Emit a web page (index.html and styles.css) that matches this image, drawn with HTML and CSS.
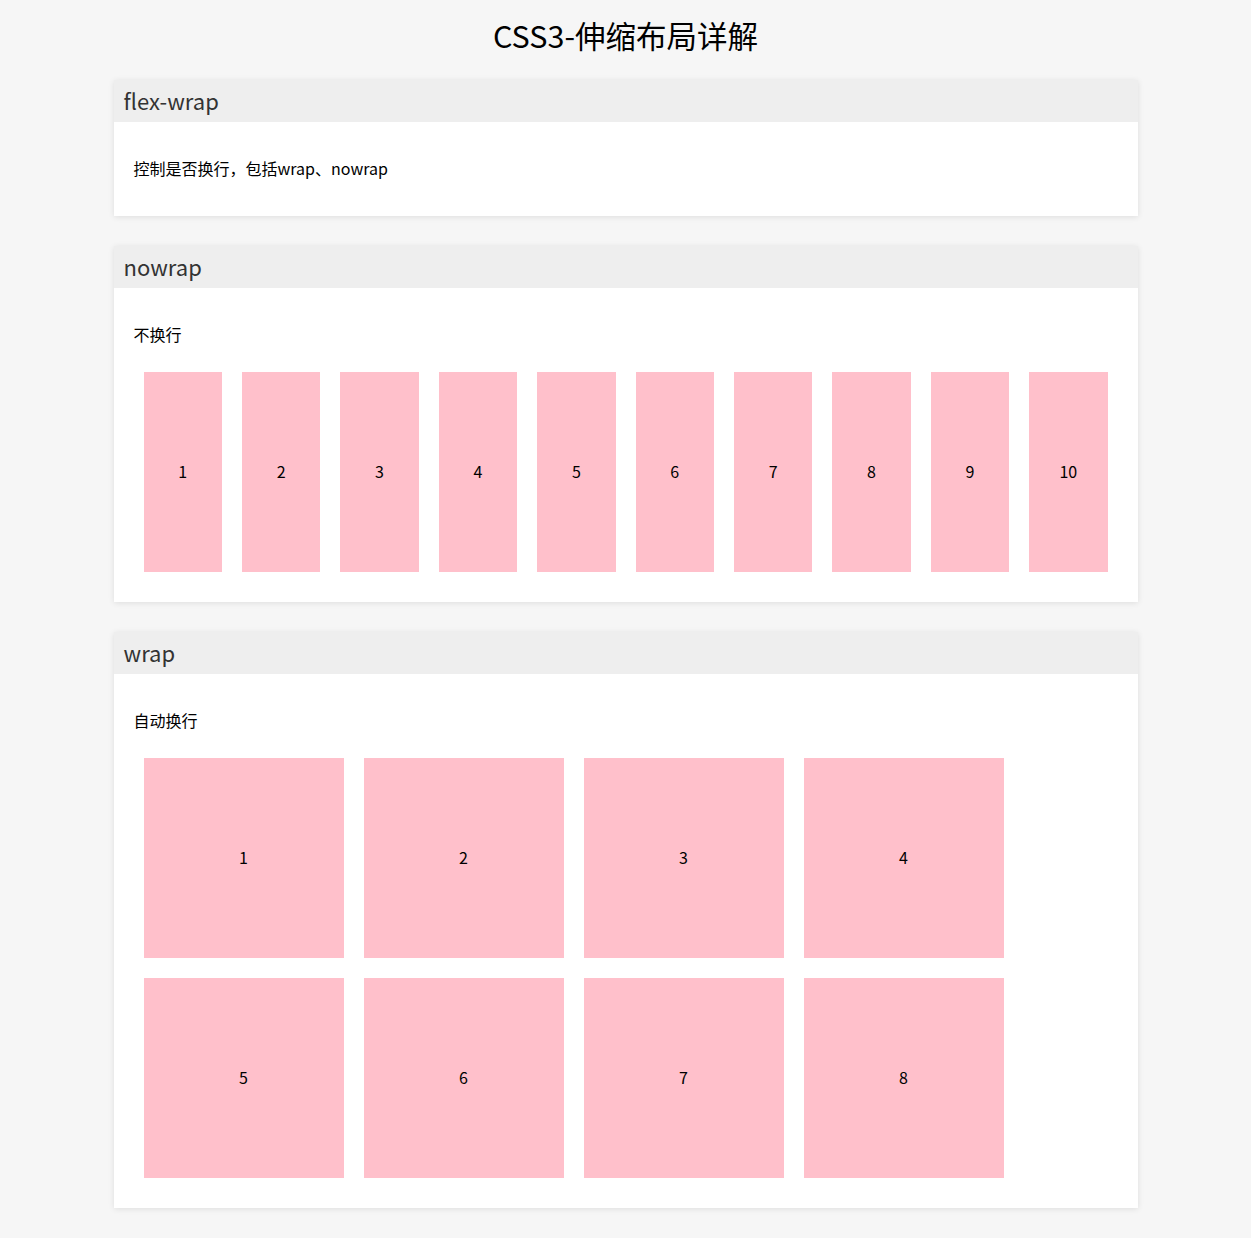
FILE: index.html
```html
<!DOCTYPE html>
<html lang="zh-CN">
<head>
  <meta charset="UTF-8">
  <meta name="viewport" content="width=device-width, initial-scale=1.0">
  <title>CSS3-伸缩布局详解</title>
  <link rel="stylesheet" href="styles.css">
</head>
<body>

  <h1>CSS3-伸缩布局详解</h1>

  <section class="panel">
    <h3 class="panel-title">flex-wrap</h3>
    <div class="panel-body">
      <p>控制是否换行，包括wrap、nowrap</p>
    </div>
  </section>

  <section class="panel">
    <h3 class="panel-title">nowrap</h3>
    <div class="panel-body">
      <p>不换行</p>
      <ul class="box nowrap">
        <li>1</li>
        <li>2</li>
        <li>3</li>
        <li>4</li>
        <li>5</li>
        <li>6</li>
        <li>7</li>
        <li>8</li>
        <li>9</li>
        <li>10</li>
      </ul>
    </div>
  </section>

  <section class="panel">
    <h3 class="panel-title">wrap</h3>
    <div class="panel-body">
      <p>自动换行</p>
      <ul class="box wrap">
        <li>1</li>
        <li>2</li>
        <li>3</li>
        <li>4</li>
        <li>5</li>
        <li>6</li>
        <li>7</li>
        <li>8</li>
      </ul>
    </div>
  </section>

</body>
</html>
```

FILE: styles.css
```css
body {
  margin: 0;
  padding: 0 0 30px;
  background-color: #f6f6f6;
  font-family: "Noto Sans CJK SC", "Noto Sans", sans-serif;
  color: #000;
}
h1 {
  margin: 15px 0 25px;
  font-size: 30.5px;
  line-height: 40px;
  font-weight: normal;
  text-align: center;
}
.panel {
  width: 1024px;
  margin: 0 auto 30px;
  background-color: #fff;
  box-shadow: 0 1px 6px rgba(0, 0, 0, 0.1);
}
.panel:last-child {
  margin-bottom: 0;
}
.panel-title {
  margin: 0;
  padding: 0 10px;
  height: 42px;
  line-height: 40px;
  font-size: 22px;
  font-weight: normal;
  color: #333;
  background-color: #eee;
}
.panel-body {
  padding: 20px;
}
.panel-body p {
  margin: 16px 0 18px;
  font-size: 16px;
  line-height: 20px;
}
.box {
  display: flex;
  margin: 0;
  padding: 0;
  list-style: none;
}
.nowrap {
  flex-wrap: nowrap;
}
.wrap {
  flex-wrap: wrap;
}
.box li {
  box-sizing: border-box;
  width: 200px;
  height: 200px;
  margin: 10px;
  padding-bottom: 2px;
  background-color: pink;
  font-size: 16px;
  line-height: 20px;
  display: flex;
  align-items: center;
  justify-content: center;
}
```
